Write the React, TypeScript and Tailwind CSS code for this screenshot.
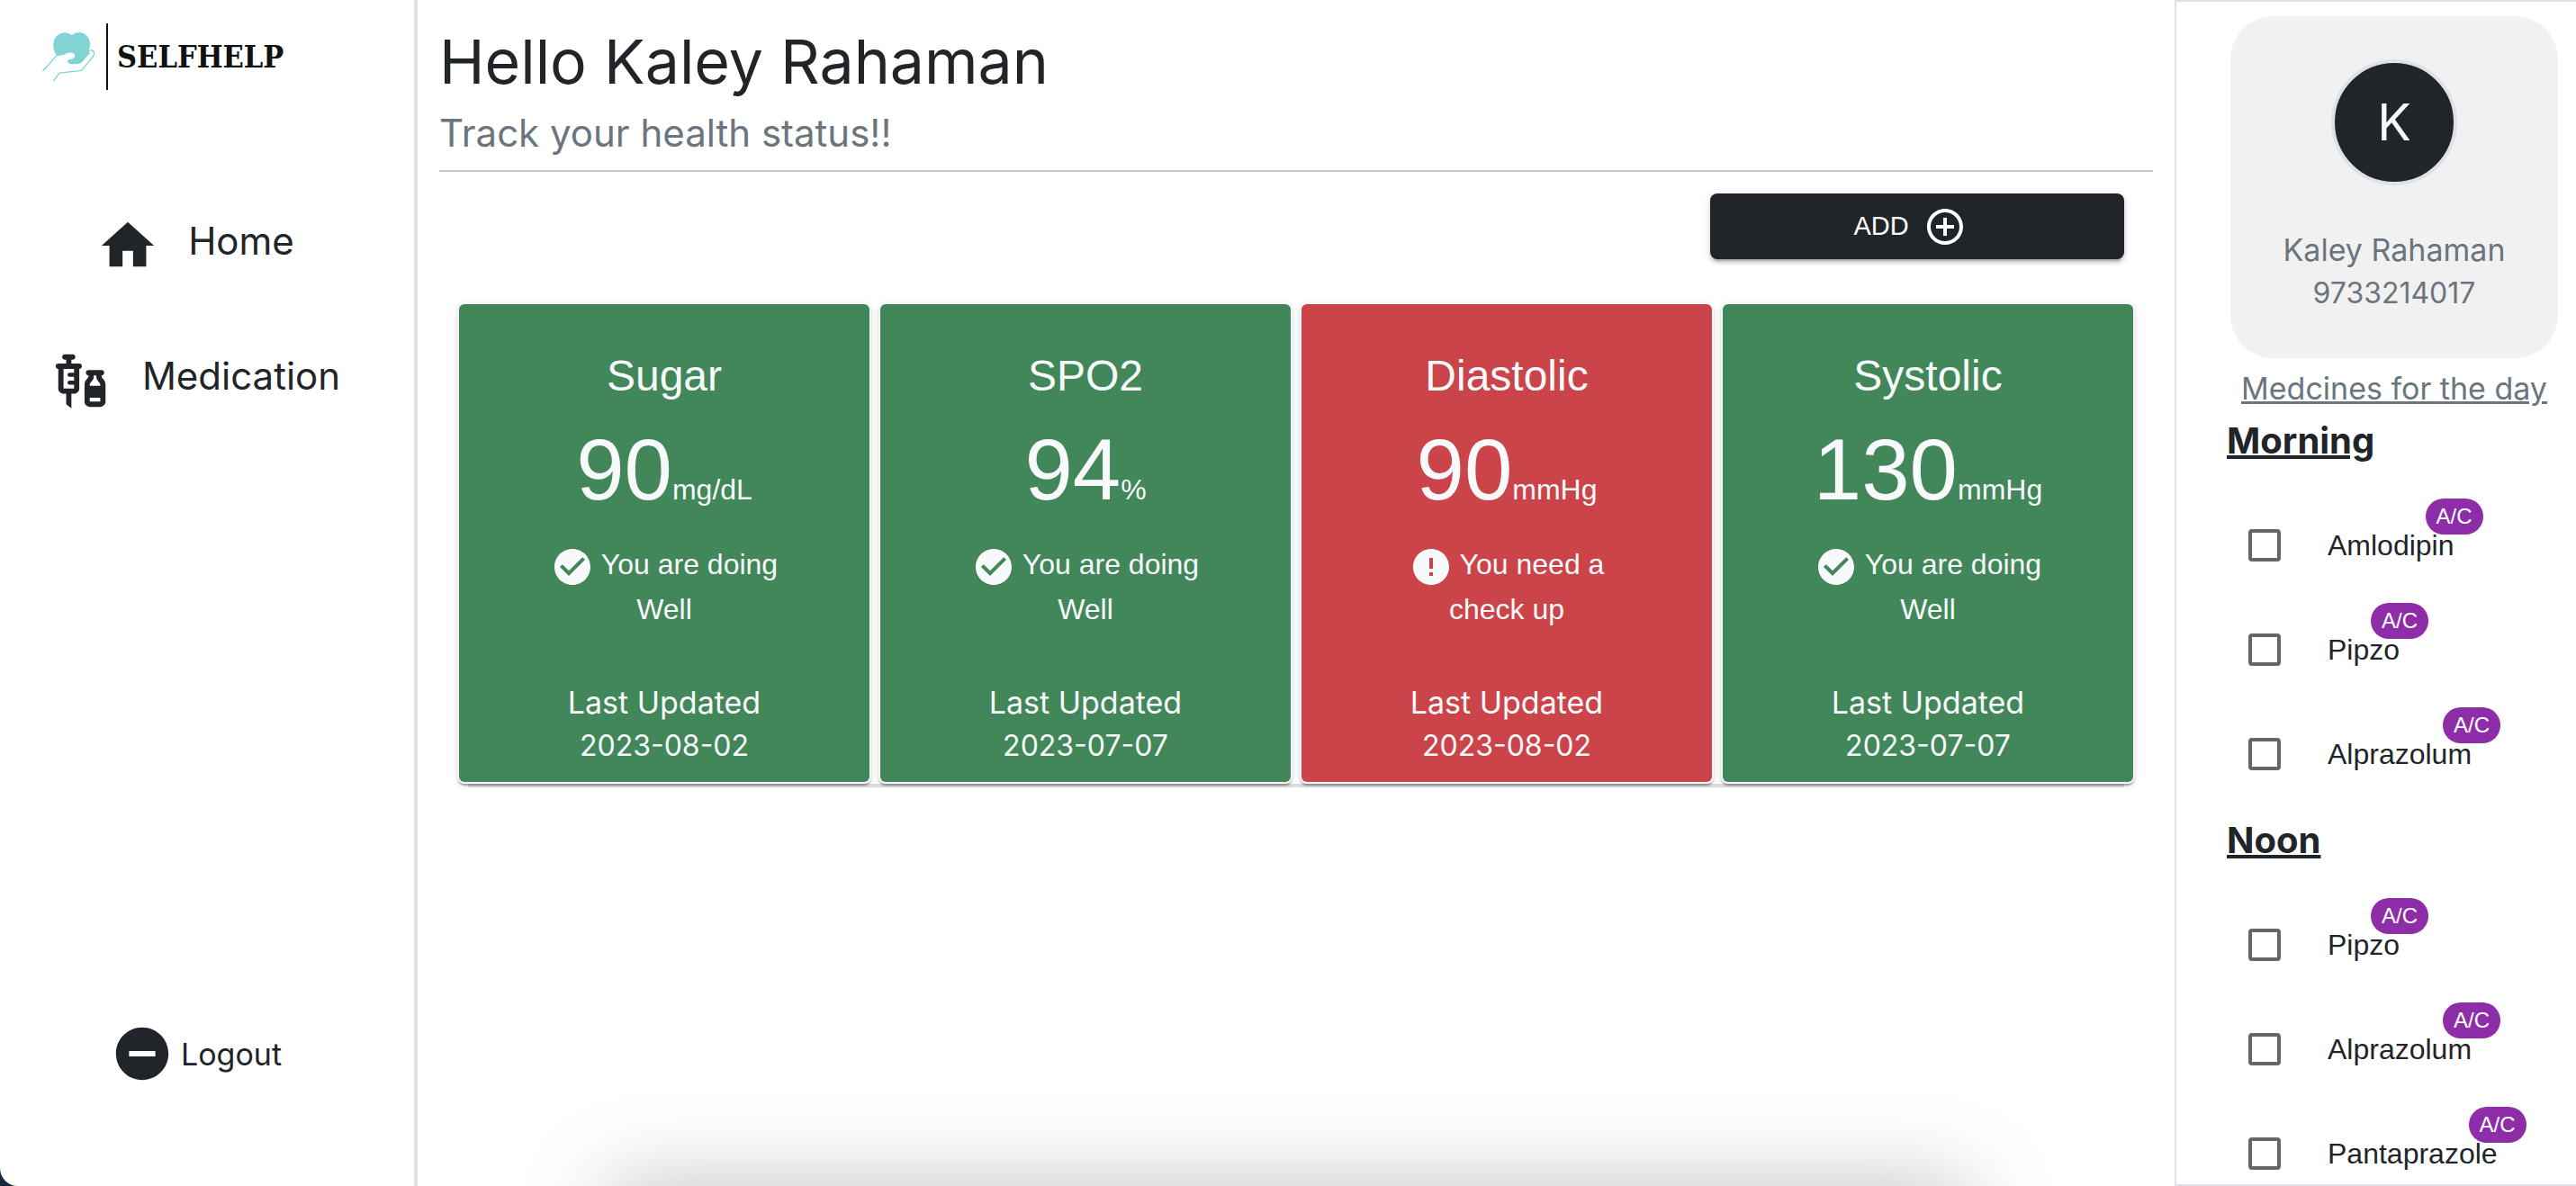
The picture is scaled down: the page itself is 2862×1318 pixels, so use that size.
import { MdHome, MdVaccines, MdRemoveCircle, MdAddCircleOutline, MdCheckCircle, MdError } from "react-icons/md";

type Reading = { name: string; value: string; unit: string; ok: boolean; date: string };

const readings: Reading[] = [
  { name: "Sugar", value: "90", unit: "mg/dL", ok: true, date: "2023-08-02" },
  { name: "SPO2", value: "94", unit: "%", ok: true, date: "2023-07-07" },
  { name: "Diastolic", value: "90", unit: "mmHg", ok: false, date: "2023-08-02" },
  { name: "Systolic", value: "130", unit: "mmHg", ok: true, date: "2023-07-07" },
];

const schedule = [
  { time: "Morning", items: ["Amlodipin", "Pipzo", "Alprazolum"] },
  { time: "Noon", items: ["Pipzo", "Alprazolum", "Pantaprazole"] },
];

function Logo() {
  return (
    <a href="#home" aria-label="SELFHELP" className="flex items-center self-start pl-[46px]">
      <svg width="62" height="62" viewBox="0 0 62 62" fill="none" className="shrink-0">
        <path
          d="M17 29.5C12 23 12 13 17 8C22 3 29 3 34 7.3C38 3 46 3 50 7.5C55 12 55 20 52 25L54 27L44.5 37.5C42 39.5 36 39.5 32 39C28 38 28 34.5 32 34C36 33.5 38 31 37 28.5C35 25.5 31 26.5 27 27.5Z"
          fill="#82d3d4"
        />
        <path
          d="M1.5 47L17 29.5L27 27.5M51 26C54 22.5 59 23.5 58.5 28C58 30 57 31.5 56 32.5L44.5 46.3L20 49L13.5 58"
          stroke="#82d3d4"
          strokeWidth="1.3"
        />
      </svg>
      <span className="ml-[10px] h-[74px] w-[2px] bg-[#111]" />
      <span className="ml-[10px] font-['DejaVu_Serif_Condensed','DejaVu_Serif',serif] text-[34px] font-bold text-[#111]">
        SELFHELP
      </span>
    </a>
  );
}

function ReadingCard({ r }: { r: Reading }) {
  return (
    <article className="rounded-lg bg-[#f8f9fa] p-[2px] shadow-[0_4px_2px_-2px_rgba(0,0,0,0.2),0_2px_2px_rgba(0,0,0,0.14),0_2px_6px_rgba(0,0,0,0.12)]">
      <div
        className={
          "flex h-full flex-col items-center rounded-md pt-[52px] pb-4 text-center text-[#f8f9fa] " +
          (r.ok ? "bg-[#418759]" : "bg-[#cb444a]")
        }
      >
        <h2 className="text-[48px] leading-[56px]">{r.name}</h2>
        <p className="mt-[22px] text-[96px] leading-[108px]">
          {r.value}
          <span className="text-[32px]">{r.unit}</span>
        </p>
        <p className="mt-1 w-[280px] text-[32px] leading-[50px]">
          {r.ok ? (
            <MdCheckCircle className="-my-1 mr-2 inline size-12 align-middle" />
          ) : (
            <MdError className="-my-1 mr-2 inline size-12 align-middle" />
          )}
          {r.ok ? "You are doing Well" : "You need a check up"}
        </p>
        <div className="mt-[55px] font-[Inter] leading-12">
          <p className="text-[34px] leading-12">Last Updated</p>
          <p className="text-[32px] leading-12">{r.date}</p>
        </div>
      </div>
    </article>
  );
}

function Medicine({ name, id }: { name: string; id: string }) {
  return (
    <li className="flex h-[116px] items-center pl-6">
      <input
        id={id}
        type="checkbox"
        className="size-9 shrink-0 appearance-none rounded-[4px] border-4 border-[#666] checked:bg-[#666]"
      />
      <label htmlFor={id} className="relative ml-[52px] font-[Liberation_Sans] text-[32px] leading-12">
        {name}
        <span className="absolute -top-7 left-full flex h-10 w-16 -translate-x-1/2 items-center justify-center rounded-full bg-[#8e2da8] text-2xl text-white">
          A/C
        </span>
      </label>
    </li>
  );
}

export default function App() {
  return (
    <div className="relative h-screen overflow-hidden bg-[#14293f]">
      <div className="flex h-full rounded-bl-[20px] bg-white font-[Inter] text-[#212529]">
        <aside className="flex w-[464px] shrink-0 flex-col border-r-4 border-[#dee2e6] pt-[26px]">
          <Logo />
          <nav className="mt-[132px] flex flex-col items-center gap-20 pr-[26px] text-[42px]">
            <a href="#home" className="flex h-[70px] items-center gap-8">
              <MdHome className="mt-3 size-[70px]" />
              Home
            </a>
            <a href="#medication" className="flex h-[70px] items-center gap-8">
              <MdVaccines className="mt-3 size-[70px]" />
              Medication
            </a>
          </nav>
          <button type="button" className="mt-auto mb-[112px] flex items-center justify-center gap-2 pr-6 text-[34px]">
            <MdRemoveCircle className="size-[70px]" />
            Logout
          </button>
        </aside>

        <main className="min-w-0 flex-1 px-6 pt-[30px] font-[Liberation_Sans]">
          <header className="border-b-2 border-[#c8c9ca] pb-[11px] font-[Inter]">
            <h1 className="text-[68px] leading-[76px]">Hello Kaley Rahaman</h1>
            <p className="mt-3 text-[42px] leading-[60px] text-[#6c757d]">Track your health status!!</p>
          </header>
          <div className="mt-6 flex justify-end pr-8">
            <button
              type="button"
              className="flex h-[73px] w-[460px] items-center justify-center gap-4 rounded-lg bg-[#212529] pr-4 text-[29px] text-white shadow-[0_6px_2px_-4px_rgba(0,0,0,0.2),0_4px_4px_rgba(0,0,0,0.14),0_2px_10px_rgba(0,0,0,0.12)]"
            >
              ADD
              <MdAddCircleOutline className="size-12" />
            </button>
          </div>
          <section className="mx-5 mt-12 grid grid-cols-4 gap-2 rounded-lg shadow-[0_16px_0_-12px_#dedede]">
            {readings.map((r) => (
              <ReadingCard key={r.name} r={r} />
            ))}
          </section>
        </main>

        <aside className="w-[446px] shrink-0 overflow-hidden border-2 border-r-0 border-[#dee2e6] pt-4">
          <section className="ml-[60px] mr-5 flex h-[380px] flex-col items-center rounded-[48px] bg-[#f1f1f1] pt-12 text-[32px] leading-12 text-[#6c757d]">
            <div className="flex size-[140px] items-center justify-center rounded-full border-4 border-[#dee2e6] bg-[#212529] text-[56px] text-[#f8f9fa]">
              K
            </div>
            <p className="mt-12 text-[34px] leading-12">Kaley Rahaman</p>
            <p>9733214017</p>
          </section>
          <div className="pl-14">
            <h2 className="mt-[10px] mr-4 mb-1 text-center text-[34px] leading-12 whitespace-nowrap text-[#6c757d] underline">
              Medcines for the day
            </h2>
            {schedule.map((s) => (
              <section key={s.time}>
                <h3 className="text-[40px] leading-[60px] font-bold underline">{s.time}</h3>
                <ul className="pt-7 pb-2">
                  {s.items.map((m) => (
                    <Medicine key={m} name={m} id={s.time + "-" + m} />
                  ))}
                </ul>
              </section>
            ))}
          </div>
        </aside>
      </div>
      <div className="pointer-events-none absolute inset-x-[676px] top-full h-40 shadow-[0_0_100px_rgba(0,0,0,0.25)]" />
    </div>
  );
}
